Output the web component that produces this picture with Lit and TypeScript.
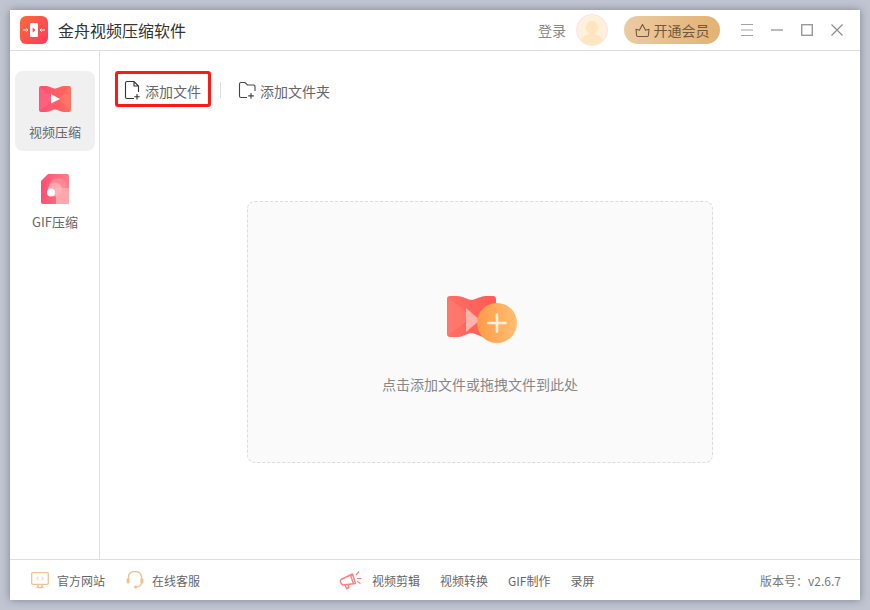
import { LitElement, html, css } from "lit";
import { customElement } from "lit/decorators.js";

const film = "M2 0 H7 Q9 0 11 1 L14.5 2.2 Q16 2.7 17.5 2.2 L21 1 Q23 0 25 0 H30 Q32 0 32 2 V24 Q32 26 30 26 H25 Q23 26 21 25 L17.5 23.8 Q16 23.3 14.5 23.8 L11 25 Q9 26 7 26 H2 Q0 26 0 24 V2 Q0 0 2 0 Z";

@customElement("app-root")
export class AppRoot extends LitElement {
  static styles = css`
    :host {
      display: block;
      width: 870px;
      height: 610px;
      box-sizing: border-box;
      padding: 10px;
      background: #c1c5d1;
      font-family: "Noto Sans CJK SC", "Noto Sans", sans-serif;
      color: #666;
    }
    .win {
      width: 850px;
      height: 590px;
      background: #fff;
      display: flex;
      flex-direction: column;
      box-shadow: 0 0 8px rgba(70, 74, 90, 0.55);
    }
    .title {
      height: 41px;
      box-sizing: border-box;
      flex: none;
      border-bottom: 1px solid #dedede;
      display: flex;
      align-items: center;
      padding: 0 16px 0 10px;
    }
    .logo { width: 28px; height: 28px; display: block; }
    .appname { margin-left: 10px; font-size: 16px; color: #333; line-height: 24px; }
    .spacer { flex: 1; }
    .login { font-size: 14px; color: #888; margin-right: 10px; }
    .avatar { width: 32px; height: 32px; display: block; margin-right: 16px; }
    .vip {
      width: 96px;
      height: 28px;
      border-radius: 14px;
      background: linear-gradient(90deg, #eccba3, #e2b273);
      display: flex;
      align-items: center;
      justify-content: center;
      gap: 4px;
      font-size: 14px;
      color: #75573a;
      margin-right: 20px;
    }
    .ctl { display: flex; align-items: center; gap: 16px; }
    .ctl svg { width: 14px; height: 14px; display: block; }
    .body { flex: 1; display: flex; min-height: 0; }
    .side {
      width: 90px;
      flex: none;
      box-sizing: border-box;
      border-right: 1px solid #dedede;
      padding: 20px 5px 0 5px;
      display: flex;
      flex-direction: column;
      gap: 10px;
    }
    .tab {
      width: 80px;
      height: 80px;
      border-radius: 8px;
      display: flex;
      flex-direction: column;
      align-items: center;
      padding-top: 12px;
      box-sizing: border-box;
      font-size: 13px;
      line-height: 20px;
      color: #666;
    }
    .tab.on { background: #f0f0f0; }
    .ico { height: 32px; margin-bottom: 7px; display: flex; align-items: center; }
    .ico svg { display: block; }
    .main { flex: 1; display: flex; flex-direction: column; min-width: 0; }
    .tools {
      display: flex;
      align-items: center;
      height: 36px;
      margin: 20px 0 0 15px;
      flex: none;
    }
    .tool { display: flex; align-items: center; gap: 4px; font-size: 14px; color: #666; height: 36px; box-sizing: border-box; padding-top: 3px; }
    .tool svg { width: 18px; height: 20px; display: block; margin-top: -1px; }
    .tool.add { width: 96px; border: 3px solid #fc1a14; border-radius: 3px; padding: 3px 0 0 6px; gap: 3px; }
    .sep { width: 1px; height: 16px; background: #dedede; margin: 2px 17px 0 9px; }
    .drop-wrap { flex: 1; padding: 94px 0 0 147px; min-height: 0; }
    .drop {
      width: 466px;
      height: 262px;
      box-sizing: border-box;
      background: #fafafa;
      border: 1px dashed #dcdcdc;
      border-radius: 8px;
      display: flex;
      flex-direction: column;
      align-items: center;
    }
    .drop svg { width: 72px; height: 50px; margin: 93px 0 0 4px; display: block; }
    .drop p { margin: 29px 0 0; font-size: 14px; line-height: 20px; color: #888; }
    .foot {
      height: 41px;
      flex: none;
      box-sizing: border-box;
      border-top: 1px solid #dedede;
      display: flex;
      align-items: center;
      padding: 0 19px 0 20px;
      font-size: 12px;
      color: #666;
    }
    .fl, .fc { display: flex; align-items: center; }
    .fl { gap: 20px; width: 309px; }
    .fc { gap: 20px; }
    .fr { margin-left: auto; color: #777; }
    .li { display: flex; align-items: center; gap: 7px; }
    .li svg { width: 20px; height: 20px; display: block; }
    .horn { width: 24px; height: 20px; display: block; margin-right: -11px; }
  `;

  render() {
    return html`<div class="win">
      <div class="title">
        <svg class="logo" viewBox="0 0 28 28">
          <defs><linearGradient id="lg" x1="0" y1="0" x2="1" y2="1"><stop offset="0" stop-color="#fe6a3c"/><stop offset="1" stop-color="#fd3b5c"/></linearGradient></defs>
          <rect width="28" height="28" rx="6" fill="url(#lg)"/>
          <rect x="10" y="7" width="8" height="14" rx="1" fill="#fff"/>
          <path d="M12.6 11.6 L15.6 14 L12.6 16.4 Z" fill="#fd4a50"/>
          <path d="M3 14 H8 M6.4 12.4 L8 14 L6.4 15.6 M25 14 H20 M21.6 12.4 L20 14 L21.6 15.6" stroke="#fff" stroke-width="1" fill="none" opacity=".9"/>
        </svg>
        <span class="appname">金舟视频压缩软件</span>
        <span class="spacer"></span>
        <span class="login">登录</span>
        <svg class="avatar" viewBox="0 0 32 32">
          <circle cx="16" cy="16" r="15.5" fill="#fdf1dd" stroke="#fbe3e3" stroke-width="1"/>
          <ellipse cx="16" cy="13.5" rx="6" ry="7" fill="#fde5bf"/>
          <path d="M5 26 Q8 21 13 20 H19 Q24 21 27 26 Q22 31 16 31 Q10 31 5 26 Z" fill="#fde5bf"/>
        </svg>
        <div class="vip">
          <svg width="15" height="15" viewBox="0 0 15 15" fill="none" stroke="#75573a" stroke-width="1.1" stroke-linejoin="round"><path d="M2.5 13.5 H12.5 Q13.2 13.5 13.4 12.5 L14 6.2 L10.6 7.2 L7.5 1.5 L4.4 7.2 L1 6.2 L1.6 12.5 Q1.8 13.5 2.5 13.5 Z"/></svg>
          <span>开通会员</span>
        </div>
        <div class="ctl">
          <svg viewBox="0 0 14 14" stroke="#a3a3a3" stroke-width="1.2" fill="none"><path d="M1 1.5 H13 M1 7 H13 M1 12.5 H13"/></svg>
          <svg viewBox="0 0 14 14" stroke="#8a8a8a" stroke-width="1.2" fill="none"><path d="M1 7 H13"/></svg>
          <svg viewBox="0 0 14 14" stroke="#999" stroke-width="1.4" fill="none"><rect x="1.7" y="1.7" width="10.6" height="10.6"/></svg>
          <svg viewBox="0 0 14 14" stroke="#8a8a8a" stroke-width="1.1" fill="none"><path d="M1.5 1.5 L12.5 12.5 M12.5 1.5 L1.5 12.5"/></svg>
        </div>
      </div>
      <div class="body">
        <div class="side">
          <div class="tab on">
            <div class="ico">
              <svg width="32" height="26" viewBox="0 0 32 26">
                <defs>
                  <linearGradient id="v1" x1="0" x2="1" y1="0" y2="0"><stop offset="0" stop-color="#fe4d75"/><stop offset="1" stop-color="#fe6c5c"/></linearGradient>
                </defs>
                <path d="${film}" fill="url(#v1)"/>
                <path d="M0.5 1 L16 13 L0.5 25 Z" fill="#ff6b8a" opacity=".55"/>
                <path d="M31.5 1 L20 13 L31.5 25 Z" fill="#ff7f6e" opacity=".5"/>
                <path d="M12 8 L21 13 L12 17.5 Z" fill="#fff"/>
              </svg>
            </div>
            视频压缩
          </div>
          <div class="tab">
            <div class="ico">
              <svg width="28" height="30" viewBox="0 0 28 30">
                <defs>
                  <linearGradient id="g1" x1="0" x2="1" y1="0" y2="0"><stop offset="0" stop-color="#fe4f72"/><stop offset="1" stop-color="#ff7d8c"/></linearGradient>
                  <clipPath id="gc"><path d="M7 0 H26 Q28 0 28 2 V28 Q28 30 26 30 H2 Q0 30 0 28 V7 Z"/></clipPath>
                </defs>
                <g clip-path="url(#gc)">
                  <rect width="28" height="30" fill="url(#g1)"/>
                  <circle cx="17" cy="13" r="9" fill="#ff909c" opacity=".75"/>
                  <rect x="15" y="14" width="13" height="16" fill="#ffa6ac"/>
                  <circle cx="14" cy="15.5" r="7" fill="#ffb4ba" opacity=".8"/>
                  <circle cx="10" cy="18.5" r="4" fill="#fff"/>
                </g>
              </svg>
            </div>
            GIF压缩
          </div>
        </div>
        <div class="main">
          <div class="tools">
            <div class="tool add">
              <svg viewBox="0 0 18 20" fill="none" stroke="#333" stroke-width="1.1">
                <path d="M10 18.5 H3 Q1.5 18.5 1.5 17 V3 Q1.5 1.5 3 1.5 H10 L14.5 6 V12 M10 1.5 V6 H14.5"/>
                <path d="M13 14 V19.5 M10.3 16.8 H15.7"/>
              </svg>
              <span>添加文件</span>
            </div>
            <div class="sep"></div>
            <div class="tool">
              <svg viewBox="0 0 18 20" fill="none" stroke="#444" stroke-width="1.1">
                <path d="M9 17.5 H3 Q1.5 17.5 1.5 16 V4 Q1.5 2.5 3 2.5 H7 L9.5 5 H15.5 Q17 5 17 6.5 V11"/>
                <path d="M13 13 V18.8 M10.2 15.9 H15.8"/>
              </svg>
              <span>添加文件夹</span>
            </div>
          </div>
          <div class="drop-wrap">
            <div class="drop">
              <svg viewBox="0 0 72 50">
                <defs>
                  <linearGradient id="d1" x1="0" x2="1" y1="0" y2="0"><stop offset="0" stop-color="#fe6f66"/><stop offset="1" stop-color="#fe5a56"/></linearGradient>
                  <linearGradient id="d2" x1="0" x2="1" y1="0" y2="0"><stop offset="0" stop-color="#fe9a4a"/><stop offset="1" stop-color="#ffbf70"/></linearGradient>
                </defs>
                <g transform="translate(1 1) scale(1.53 1.577)"><path d="${film}" fill="url(#d1)"/></g>
                <path d="M1.5 2 L26 21.5 L1.5 41 Z" fill="#ff8278" opacity=".5"/>
                <path d="M20 13 L34 25 L20 37 Z" fill="#ffb3ab"/>
                <circle cx="51" cy="28" r="20" fill="url(#d2)"/>
                <path d="M51 19.5 V36.5 M42.5 28 H59.5" stroke="#fff0df" stroke-width="2.6" stroke-linecap="round"/>
              </svg>
              <p>点击添加文件或拖拽文件到此处</p>
            </div>
          </div>
        </div>
      </div>
      <div class="foot">
        <div class="fl">
          <div class="li">
            <svg viewBox="0 0 20 20" fill="none" stroke="#efc391" stroke-width="1.3">
              <rect x="1.7" y="2.7" width="16.6" height="11.6" rx="1"/>
              <path d="M8.5 6.8 L6.8 8.5 L8.5 10.2 M11.5 6.8 L13.2 8.5 L11.5 10.2" stroke-width="1"/>
              <path d="M6.5 17.5 H13.5 M8 15 V17 M12 15 V17" stroke-width="1.6"/>
            </svg>
            <span>官方网站</span>
          </div>
          <div class="li">
            <svg viewBox="0 0 20 20" fill="none" stroke="#efc391" stroke-width="1.4">
              <path d="M3.5 9 V7.5 Q3.5 1.5 10 1.5 Q16.5 1.5 16.5 7.5 V9"/>
              <rect x="1.6" y="8" width="3" height="5.6" rx="1.5" fill="#efc391" stroke="none"/>
              <rect x="15.4" y="8" width="3" height="5.6" rx="1.5" fill="#efc391" stroke="none"/>
              <path d="M16.5 13 Q16 16.5 11.5 17"/>
              <circle cx="10.5" cy="17" r="1.6" fill="#efc391" stroke="none"/>
            </svg>
            <span>在线客服</span>
          </div>
        </div>
        <div class="fc">
          <svg class="horn" viewBox="0 0 24 20" fill="none" stroke="#ff7f7f" stroke-width="1.4" stroke-linejoin="round">
            <path d="M2 9.5 L13.5 4 L16.5 13.5 L4 15 Q2 14 1.5 12 Q1.2 10.5 2 9.5 Z"/>
            <path d="M11.5 5 L14.5 13.7"/>
            <path d="M6 15 L7.5 18.5 L10 17.5 L9 14.5"/>
            <path d="M17 6.5 L20 3 M18 10 H22.5 M18 12.8 L21.5 15" stroke-width="1.2" transform="translate(0 -1.5)"/>
          </svg>
          <span>视频剪辑</span>
          <span>视频转换</span>
          <span>GIF制作</span>
          <span>录屏</span>
        </div>
        <div class="fr">版本号：v2.6.7</div>
      </div>
    </div>`;
  }
}
